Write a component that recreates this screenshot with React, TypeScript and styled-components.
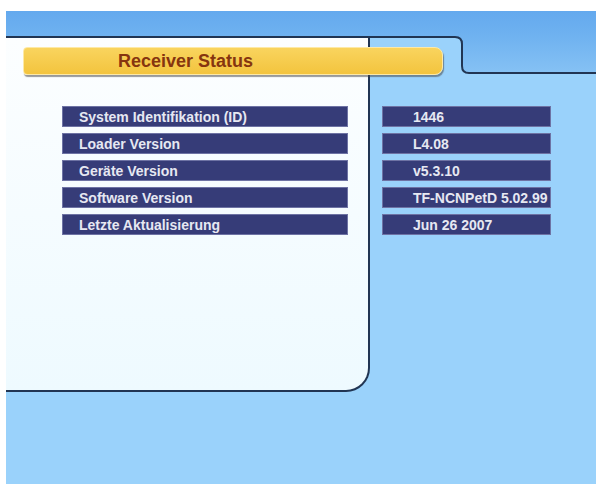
import React from 'react';
import styled, { createGlobalStyle } from 'styled-components';

const GlobalStyle = createGlobalStyle`
  html, body {
    margin: 0;
    background: #fff;
  }
  body {
    padding: 11px 5px 0 6px;
    font-family: "Liberation Sans", Arial, sans-serif;
  }
`;

const BAND_TOP = '#64a9ee';
const BAND_MID = '#6fb2f0';
const BAND_BOTTOM = '#85c1f4';
const LINE = '#213553';
const SKY = '#9ad2fb';

const Screen = styled.div`
  width: 590px;
  height: 473px;
  display: grid;
  grid-template-columns: 364px 1fr;
  grid-template-rows: 25px 38px 318px 1fr;
  background: ${SKY};
`;

const TopBand = styled.div`
  grid-row: 1;
  grid-column: 1 / 3;
  background: linear-gradient(${BAND_TOP}, ${BAND_MID});
`;

const Panel = styled.div`
  grid-row: 2 / 4;
  grid-column: 1;
  box-sizing: border-box;
  background: linear-gradient(#fcfeff, #eefaff);
  border-top: 2px solid ${LINE};
  border-right: 2px solid ${LINE};
  border-bottom: 2px solid ${LINE};
  border-bottom-right-radius: 24px;
`;

const Header = styled.div`
  grid-row: 2;
  grid-column: 2;
  display: flex;
`;

const Spacer = styled.div`
  width: 85px;
  border-top: 2px solid ${LINE};
  background: ${SKY};
`;

const Tab = styled.div`
  flex: 1;
  background: linear-gradient(${BAND_MID}, ${BAND_BOTTOM});
  border-bottom: 2px solid ${LINE};
`;

const Content = styled.div`
  grid-row: 2 / 4;
  grid-column: 1 / 3;
  padding-top: 11px;
  display: flex;
  flex-direction: column;
`;

const TitleBar = styled.div`
  margin-left: 17px;
  width: 420px;
  height: 28px;
  box-sizing: border-box;
  padding-left: 94px;
  display: flex;
  align-items: center;
  background: linear-gradient(#f9d45e, #f3c43e);
  border: 1px solid #fde9a6;
  border-radius: 4px 8px 8px 4px;
  box-shadow: 1px 2px 1px rgba(70, 70, 70, 0.55);
  color: #86350f;
  font-size: 18px;
  font-weight: bold;
`;

const Table = styled.div`
  margin-top: 31px;
  display: grid;
  grid-template-columns: 364px 1fr;
  row-gap: 6px;
`;

const Cell = styled.div<{ $value?: boolean }>`
  margin-left: ${p => (p.$value ? '12px' : '56px')};
  width: ${p => (p.$value ? '169px' : '286px')};
  height: 21px;
  box-sizing: border-box;
  padding-left: ${p => (p.$value ? '30px' : '16px')};
  display: flex;
  align-items: center;
  background: #363c78;
  border: 1px solid #6e73a4;
  color: #e6e8f2;
  font-size: 14px;
  font-weight: bold;
  white-space: nowrap;
`;

const Curve = () => (
  <svg width="14" height="38" viewBox="0 0 14 38">
    <defs>
      <linearGradient id="tabfill" x1="0" y1="0" x2="0" y2="1">
        <stop offset="0" stopColor={BAND_MID} />
        <stop offset="1" stopColor={BAND_BOTTOM} />
      </linearGradient>
    </defs>
    <rect width="14" height="38" fill={SKY} />
    <path d="M0 0 H14 V37 Q7 37 7 30 V8 Q7 1 0 1 Z" fill="url(#tabfill)" />
    <path d="M0 1 Q7 1 7 8 V30 Q7 37 14 37" fill="none" stroke={LINE} strokeWidth="2" />
  </svg>
);

const rows = [
  ['System Identifikation (ID)', '1446'],
  ['Loader Version', 'L4.08'],
  ['Geräte Version', 'v5.3.10'],
  ['Software Version', 'TF-NCNPetD 5.02.99'],
  ['Letzte Aktualisierung', 'Jun 26 2007'],
];

const App = () => {
  return (
    <>
      <GlobalStyle />
      <Screen>
        <TopBand />
        <Panel />
        <Header>
          <Spacer />
          <Curve />
          <Tab />
        </Header>
        <Content>
          <TitleBar>Receiver Status</TitleBar>
          <Table>
            {rows.map(([label, value]) => (
              <React.Fragment key={label}>
                <Cell>{label}</Cell>
                <Cell $value>{value}</Cell>
              </React.Fragment>
            ))}
          </Table>
        </Content>
      </Screen>
    </>
  );
};

export default App;
